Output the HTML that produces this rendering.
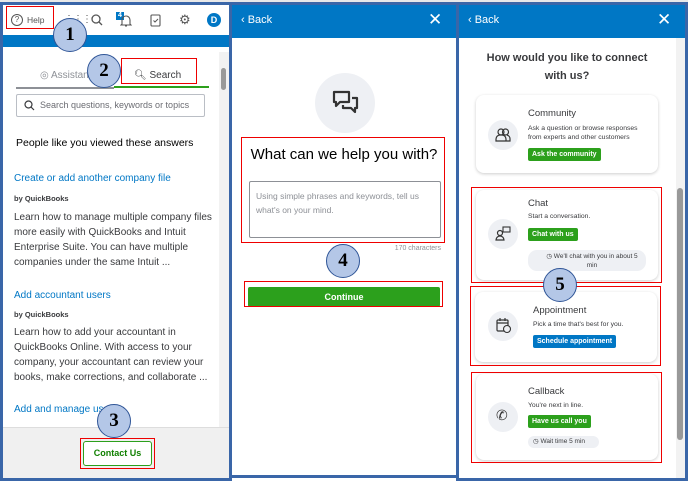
<!DOCTYPE html>
<html><head><style>
*{margin:0;padding:0;box-sizing:border-box}
body{width:688px;height:481px;position:relative;overflow:hidden;background:#fff;font-family:"Liberation Sans",sans-serif;color:#393a3d}
.a{position:absolute}
.panel{position:absolute;background:#fff;border:3px solid #3a66a8;overflow:hidden}
.hdr{position:absolute;left:0;right:0;top:0;height:33px;background:#0077c5;color:#fff;font-size:12px}
.num{position:absolute;width:34px;height:34px;border-radius:50%;background:#b4c7e7;border:1.5px solid #2f5597;font:bold 19px "Liberation Serif",serif;color:#000;text-align:center;line-height:31px;z-index:5}
.red{position:absolute;border:1.5px solid #e00;z-index:3}
.card{position:absolute;background:#fff;border-radius:8px;box-shadow:0 1px 3px rgba(0,0,0,.2)}
.ic{position:absolute;width:30px;height:30px;border-radius:50%;background:#eef0f4}
.btn{position:absolute;color:#fff;font-size:7px;font-weight:bold;padding:3px 4px;border-radius:2px;background:#2ca01c}
.ct{position:absolute;font-size:9.5px;color:#393a3d}
.cs{position:absolute;font-size:6.8px;color:#393a3d;line-height:9px}
.pill{position:absolute;background:#eef0f4;border-radius:9px;font-size:6.5px;color:#393a3d}
.lnk{position:absolute;left:11px;font-size:10px;color:#0077c5}
.by{position:absolute;left:11px;font-size:7.5px;font-weight:bold;color:#393a3d}
.p{position:absolute;left:11px;font-size:10px;line-height:15px;color:#393a3d;width:200px}
</style></head><body>
<div class="a" style="left:0;top:0;width:688px;height:3px;background:#e8e8e8"></div>

<!-- LEFT -->
<div class="panel" style="left:0;top:2px;width:232px;height:479px">
 <div class="a" style="left:0;top:30px;width:226px;height:12px;background:#0077c5"></div>
 <div class="a" style="left:8px;top:9px;width:12px;height:12px;border:1.2px solid #555;border-radius:50%;font-size:8px;text-align:center;line-height:10px;color:#555">?</div>
 <div class="a" style="left:24px;top:10px;font-size:8.5px;color:#555">Help</div>
 <div class="a" style="left:61px;top:9px;font-size:10px;color:#555;letter-spacing:-1px">⋮⋮⋮</div>
 <svg class="a" style="left:88px;top:9px" width="12" height="12"><circle cx="5" cy="5" r="4" fill="none" stroke="#555" stroke-width="1.3"/><path d="M8 8l3 3" stroke="#555" stroke-width="1.3"/></svg>
 <div class="a" style="left:113px;top:7px;width:8px;height:8px;background:#0077c5;color:#fff;font-size:7px;font-weight:bold;text-align:center;line-height:8px">4</div>
 <svg class="a" style="left:117px;top:9px" width="12" height="14"><path d="M2 10V6a4 4 0 018 0v4l1 1H1z M5 12h2" fill="none" stroke="#555" stroke-width="1.1"/></svg>
 <svg class="a" style="left:147px;top:8px" width="11" height="14"><rect x="1" y="2" width="9" height="11" rx="1" fill="none" stroke="#555" stroke-width="1.1"/><path d="M3.5 7.5l1.5 1.5 3-3" fill="none" stroke="#555"/></svg>
 <div class="a" style="left:176px;top:7px;font-size:13px;color:#555">⚙</div>
 <div class="a" style="left:204px;top:8px;width:14px;height:14px;border-radius:50%;background:#0077c5;color:#fff;font-size:9px;font-weight:bold;text-align:center;line-height:14px">D</div>
 <div class="a" style="left:216px;top:47px;width:10px;height:380px;background:#f2f2f2"></div>
 <div class="a" style="left:218px;top:63px;width:5px;height:22px;background:#999;border-radius:3px"></div>
 <div class="a" style="left:37px;top:65px;font-size:10px;color:#8d9096">◎ Assistan</div>
 <div class="a" style="left:131px;top:65px;font-size:10px;color:#393a3d">🔍︎ Search</div>
 <div class="a" style="left:13px;top:82px;width:98px;height:1.5px;background:#8d9096"></div>
 <div class="a" style="left:111px;top:81px;width:95px;height:2px;background:#2ca01c"></div>
 <div class="a" style="left:13px;top:89px;width:189px;height:23px;border:1px solid #babec5;border-radius:2px"></div>
 <svg class="a" style="left:21px;top:95px" width="11" height="11"><circle cx="4.5" cy="4.5" r="3.5" fill="none" stroke="#393a3d" stroke-width="1.2"/><path d="M7 7l3 3" stroke="#393a3d" stroke-width="1.2"/></svg>
 <div class="a" style="left:37px;top:95px;font-size:9px;color:#6b6c72">Search questions, keywords or topics</div>
 <div class="a" style="left:13px;top:132px;font-size:10.5px;color:#000">People like you viewed these answers</div>
 <div class="lnk" style="top:168px">Create or add another company file</div>
 <div class="by" style="top:189px">by QuickBooks</div>
 <div class="p" style="top:205px">Learn how to manage multiple company files more easily with QuickBooks and Intuit Enterprise Suite. You can have multiple companies under the same Intuit ...</div>
 <div class="lnk" style="top:285px">Add accountant users</div>
 <div class="by" style="top:305px">by QuickBooks</div>
 <div class="p" style="top:320px">Learn how to add your accountant in QuickBooks Online. With access to your company, your accountant can review your books, make corrections, and collaborate ...</div>
 <div class="lnk" style="top:399px">Add and manage us</div>
 <div class="a" style="left:0;top:422px;width:226px;height:57px;background:#f0f0f0;border-top:1px solid #ddd"></div>
 <div class="red" style="left:77px;top:433px;width:75px;height:31px"></div>
 <div class="a" style="left:80px;top:436px;width:69px;height:25px;border:1px solid #2ca01c;border-radius:3px;background:#fff;color:#108000;font-size:9px;font-weight:bold;text-align:center;line-height:23px;z-index:4">Contact Us</div>
</div>
<div class="red" style="left:6px;top:6px;width:48px;height:23px"></div>
<div class="num" style="left:53px;top:18px">1</div>
<div class="red" style="left:121px;top:58px;width:76px;height:26px"></div>
<div class="num" style="left:87px;top:54px">2</div>
<div class="num" style="left:97px;top:404px">3</div>

<!-- MIDDLE -->
<div class="panel" style="left:229px;top:2px;width:230px;height:476px">
 <div class="hdr"><span class="a" style="left:9px;top:9px;font-size:11px">‹ Back</span><span class="a" style="left:196px;top:5px;font-size:17px">✕</span></div>
 <div class="a" style="left:83px;top:68px;width:60px;height:60px;border-radius:50%;background:#eef0f4"></div>
 <svg class="a" style="left:99px;top:84px" width="30" height="28"><path d="M3 3h15v10H9l-4 4v-4H3z" fill="none" stroke="#333" stroke-width="2.2" stroke-linejoin="round"/><path d="M21 9h5v10h-2v4l-4-4h-8v-3" fill="none" stroke="#333" stroke-width="2.2" stroke-linejoin="round"/></svg>
 <div class="a" style="left:0;width:224px;top:141px;text-align:center;font-size:15px;color:#000">What can we help you with?</div>
 <div class="a" style="left:17px;top:176px;width:192px;height:57px;border:1px solid #8d9096;border-radius:2px"></div>
 <div class="a" style="left:24px;top:184px;width:180px;font-size:8.5px;line-height:14px;color:#8d9096">Using simple phrases and keywords, tell us what's on your mind.</div>
 <div class="a" style="right:15px;top:240px;font-size:7px;color:#8d9096">170 characters</div>
 <div class="a" style="left:16px;top:282px;width:192px;height:20px;background:#2ca01c;border-radius:2px;color:#fff;font-size:9px;font-weight:bold;text-align:center;line-height:20px">Continue</div>
</div>
<div class="red" style="left:241px;top:137px;width:204px;height:106px"></div>
<div class="num" style="left:326px;top:244px">4</div>
<div class="red" style="left:244px;top:281px;width:199px;height:26px"></div>

<!-- RIGHT -->
<div class="panel" style="left:456px;top:2px;width:232px;height:479px">
 <div class="hdr"><span class="a" style="left:9px;top:9px;font-size:11px">‹ Back</span><span class="a" style="left:198px;top:5px;font-size:17px">✕</span></div>
 <div class="a" style="left:0;width:216px;top:44px;text-align:center;font-size:11px;font-weight:bold;line-height:18px;color:#393a3d">How would you like to connect<br>with us?</div>
 <div class="a" style="left:217px;top:33px;width:9px;height:443px;background:#f2f2f2"></div>
 <div class="a" style="left:218px;top:183px;width:6px;height:252px;background:#999;border-radius:3px"></div>
</div>
<!-- community -->
<div class="card" style="left:476px;top:95px;width:182px;height:78px"></div>
<div class="ic" style="left:488px;top:120px"></div>
<svg class="a" style="left:495px;top:127px" width="16" height="16"><circle cx="6" cy="5" r="3" fill="none" stroke="#333" stroke-width="1.2"/><circle cx="10.5" cy="5" r="3" fill="none" stroke="#333" stroke-width="1.2"/><path d="M1 14v-2a4 4 0 014-4h2a4 4 0 014 4v2zM11 14h4v-2a4 4 0 00-3-4" fill="none" stroke="#333" stroke-width="1.2"/></svg>
<div class="ct" style="left:528px;top:108px">Community</div>
<div class="cs" style="left:528px;top:124px">Ask a question or browse responses<br>from experts and other customers</div>
<div class="btn" style="left:528px;top:148px">Ask the community</div>
<!-- chat -->
<div class="red" style="left:471px;top:187px;width:191px;height:96px"></div>
<div class="card" style="left:476px;top:190px;width:182px;height:90px"></div>
<div class="ic" style="left:488px;top:219px"></div>
<svg class="a" style="left:495px;top:226px" width="16" height="16"><circle cx="5" cy="7" r="2.5" fill="none" stroke="#333" stroke-width="1.2"/><path d="M1 14a4 4 0 018 0z" fill="none" stroke="#333" stroke-width="1.2"/><rect x="8" y="1" width="7" height="5" fill="none" stroke="#333" stroke-width="1.1"/></svg>
<div class="ct" style="left:528px;top:198px">Chat</div>
<div class="cs" style="left:528px;top:212px">Start a conversation.</div>
<div class="btn" style="left:528px;top:228px">Chat with us</div>
<div class="pill" style="left:528px;top:250px;width:118px;height:21px;padding:2px 0 0 10px;text-align:center;line-height:9px">◷ We'll chat with you in about 5<br>min</div>
<!-- appointment -->
<div class="red" style="left:470px;top:286px;width:191px;height:80px"></div>
<div class="card" style="left:475px;top:292px;width:182px;height:70px"></div>
<div class="ic" style="left:488px;top:311px"></div>
<svg class="a" style="left:496px;top:318px" width="16" height="16"><rect x="1" y="2" width="11" height="11" rx="1" fill="none" stroke="#333" stroke-width="1.2"/><path d="M1 5h11M4 0v3M9 0v3" stroke="#333" stroke-width="1.2"/><circle cx="11" cy="11" r="3.5" fill="#eef0f4" stroke="#333" stroke-width="1.1"/></svg>
<div class="ct" style="left:533px;top:305px">Appointment</div>
<div class="cs" style="left:533px;top:320px">Pick a time that's best for you.</div>
<div class="btn" style="left:533px;top:335px;background:#0077c5">Schedule appointment</div>
<!-- callback -->
<div class="red" style="left:471px;top:372px;width:191px;height:91px"></div>
<div class="card" style="left:476px;top:374px;width:182px;height:86px"></div>
<div class="ic" style="left:488px;top:402px"></div>
<div class="a" style="left:496px;top:407px;font-size:14px;color:#333">✆</div>
<div class="ct" style="left:528px;top:386px">Callback</div>
<div class="cs" style="left:528px;top:401px">You're next in line.</div>
<div class="btn" style="left:528px;top:415px">Have us call you</div>
<div class="pill" style="left:528px;top:436px;width:71px;height:12px;padding-left:5px;line-height:12px">◷ Wait time 5 min</div>
<div class="num" style="left:543px;top:268px">5</div>
</body></html>
